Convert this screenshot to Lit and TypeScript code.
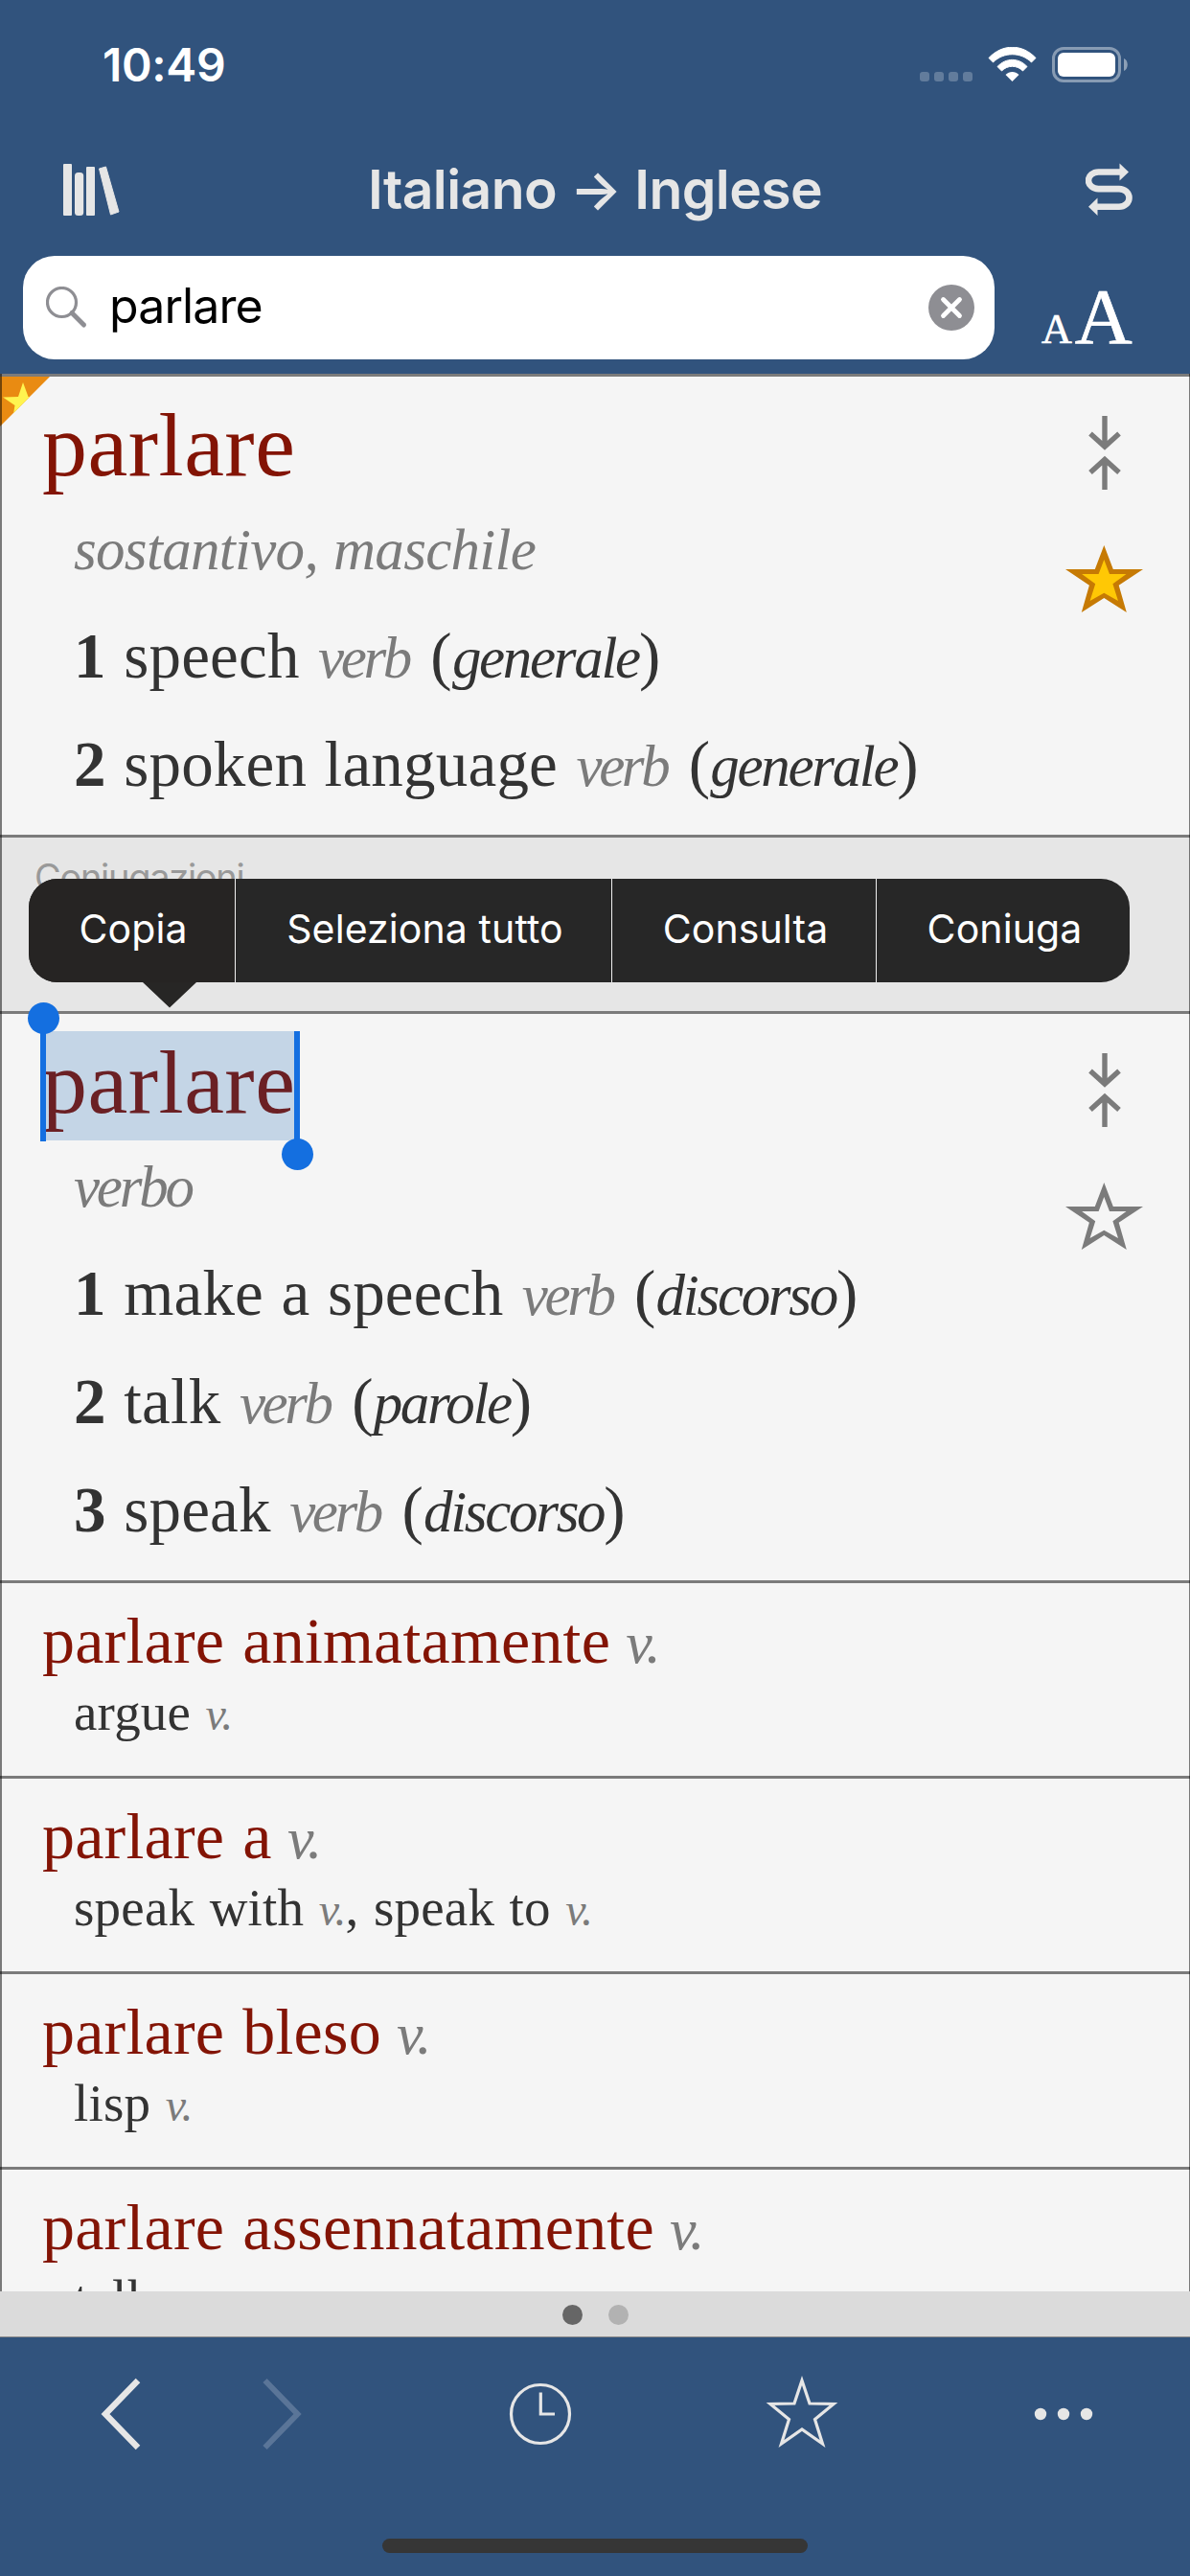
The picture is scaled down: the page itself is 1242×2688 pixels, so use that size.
import { LitElement, html, css, svg, nothing } from 'lit';
import { customElement, property } from 'lit/decorators.js';

const STAR = '40.3,0 49.8,25 81,25 55.7,41.7 63.8,70 40.3,55 16.8,70 24.9,41.7 0,25 30.8,25';
const STAR_INNER = '40.3,15 46,30 63.5,30 49.4,40.3 55,58 40.3,49.7 25.6,58 31.2,40.3 17.1,30 34.6,30';

const SENSES_NOUN = [
  { text: 'speech', note: 'generale' },
  { text: 'spoken language', note: 'generale' },
];

const SENSES_VERB = [
  { text: 'make a speech', note: 'discorso' },
  { text: 'talk', note: 'parole' },
  { text: 'speak', note: 'discorso' },
];

const PHRASES = [
  { title: 'parlare animatamente', words: ['argue'] },
  { title: 'parlare a', words: ['speak with', 'speak to'] },
  { title: 'parlare bleso', words: ['lisp'] },
  { title: 'parlare assennatamente', words: ['talk'] },
];

@customElement('status-bar')
export class StatusBar extends LitElement {
  static styles = css`
    :host {
      display: flex;
      justify-content: space-between;
      align-items: flex-start;
      height: 137px;
      box-sizing: border-box;
      padding: 49px 64px 0 107px;
    }
    .time {
      font: 600 48px/38px Inter, sans-serif;
      letter-spacing: -0.3px;
      color: #fff;
    }
    svg {
      display: block;
    }
  `;

  render() {
    return html`
      <div class="time">10:49</div>
      <svg width="218" height="38" viewBox="0 0 218 38">
        <g fill="#fff" fill-opacity=".24">
          <rect x="0" y="26" width="10" height="10" rx="3"></rect>
          <rect x="15" y="26" width="10" height="10" rx="3"></rect>
          <rect x="30" y="26" width="10" height="10" rx="3"></rect>
          <rect x="45" y="26" width="10" height="10" rx="3"></rect>
        </g>
        <g fill="#fff">
          <path d="M72 11.5 C86 -3.5 107 -3.5 121 11.5 L116.500 16 C105.500 5 87.500 5 76.500 16 Z" stroke="#fff" stroke-width="1" stroke-linejoin="round"></path>
          <path d="M81 20.500 C90 11 103 11 112 20.500 L107.500 25 C101.500 18.700 91.500 18.700 85.500 25 Z" stroke="#fff" stroke-width="1" stroke-linejoin="round"></path>
          <path d="M89.500 29 C93.500 25 99.500 25 103.500 29 L96.500 36 Z"></path>
        </g>
        <rect x="139.500" y="1.500" width="69" height="34" rx="10.500" fill="none" stroke="#fff" stroke-opacity=".42" stroke-width="3"></rect>
        <rect x="144" y="6" width="60" height="25" rx="6" fill="#fff"></rect>
        <path d="M213 12 C218 14 218 23 213 25 Z" fill="#fff" fill-opacity=".45"></path>
      </svg>
    `;
  }
}

@customElement('search-header')
export class SearchHeader extends LitElement {
  static styles = css`
    :host {
      display: block;
    }
    .nav {
      display: flex;
      justify-content: space-between;
      align-items: center;
      height: 122px;
      padding: 0 60px 0 66px;
      box-sizing: border-box;
    }
    .title {
      margin-right: 17px;
      font: 600 57px/122px Inter, sans-serif;
      letter-spacing: -0.6px;
      color: #e6e6e6;
      white-space: nowrap;
    }
    .row {
      display: flex;
      padding: 8px 0 15px 24px;
    }
    .field {
      display: flex;
      align-items: center;
      width: 1014px;
      height: 108px;
      box-sizing: border-box;
      padding: 0 21px 0 24px;
      border-radius: 33px;
      background: #fff;
    }
    .query {
      flex: 1;
      margin-left: 22px;
      padding-bottom: 4px;
      font: 400 50px/60px Inter, sans-serif;
      letter-spacing: -0.9px;
      color: #000;
    }
    .size {
      display: flex;
      align-items: baseline;
      gap: 3px;
      margin-left: 49px;
      padding-top: 17px;
      font-family: 'Liberation Serif', serif;
      line-height: 92px;
      color: #fff;
      -webkit-text-stroke: 0.7px #fff;
    }
    .small {
      font-size: 44px;
    }
    .large {
      font-size: 83px;
    }
    svg {
      display: block;
    }
  `;

  render() {
    return html`
      <div class="nav">
        <svg width="60" height="54" viewBox="0 0 60 54" fill="#e6e6e6">
          <rect x="0" y="0" width="9" height="54" rx="1"></rect>
          <rect x="12" y="9" width="9.200" height="45" rx="3.500"></rect>
          <rect x="24" y="3" width="9" height="51" rx="1"></rect>
          <path d="M37.500 5 L44.500 3 L58 50 L49.500 53 Z" stroke="#e6e6e6" stroke-linejoin="round"></path>
        </svg>
        <div class="title">Italiano → Inglese</div>
        <svg width="49" height="56" viewBox="0 0 49 56">
          <path d="M36 9.500 H13.500 A10.500 8.800 0 0 0 13.500 27.100 H35 A10.500 9.300 0 0 1 35 45.700 H12" fill="none" stroke="#e6e6e6" stroke-width="6.600"></path>
          <path d="M35.500 0.500 L45 9.500 L35.500 18.500 Z M12.500 36.500 L3 45.700 L12.500 55 Z" fill="#e6e6e6"></path>
        </svg>
      </div>
      <div class="row">
        <div class="field">
          <svg width="44" height="44" viewBox="0 0 44 44" fill="none" stroke="#8e8e93">
            <circle cx="16.500" cy="16.500" r="15" stroke-width="3.200"></circle>
            <path d="M27 27.500 L39.500 40" stroke-width="5" stroke-linecap="round"></path>
          </svg>
          <div class="query">parlare</div>
          <svg width="48" height="48" viewBox="0 0 48 48">
            <circle cx="24" cy="24" r="24" fill="#8e8e93"></circle>
            <path d="M15.500 15.500 L32.500 32.500 M32.500 15.500 L15.500 32.500" stroke="#fff" stroke-width="4.800" stroke-linecap="round"></path>
          </svg>
        </div>
        <div class="size"><span class="small">A</span><span class="large">A</span></div>
      </div>
    `;
  }
}

@customElement('dict-entry')
export class DictEntry extends LitElement {
  @property() word = '';
  @property() kind = '';
  @property({ type: Array }) senses: { text: string; note: string }[] = [];
  @property({ type: Boolean }) starred = false;
  @property({ type: Boolean }) selected = false;

  static styles = css`
    :host {
      display: flex;
      justify-content: space-between;
      position: relative;
      box-sizing: border-box;
      padding: 20px 48px 17px 44px;
      font-family: 'Liberation Serif', serif;
      color: #333;
      background: #f5f5f5;
    }
    .word {
      position: relative;
      width: max-content;
      font-size: 94px;
      line-height: 102px;
      letter-spacing: 0.5px;
      color: #831405;
    }
    .word span {
      position: relative;
    }
    .selected {
      color: #6b2024;
    }
    .range {
      position: absolute;
      left: -2px;
      right: -5px;
      top: -2px;
      height: 114px;
      box-sizing: border-box;
      background: #c4d5e6;
    }
    .handle {
      position: absolute;
      top: -2px;
      width: 6px;
      height: 115px;
      background: #146fe0;
    }
    .handle::before {
      content: '';
      position: absolute;
      left: -13px;
      width: 33px;
      height: 33px;
      border-radius: 50%;
      background: #146fe0;
    }
    .from {
      left: -2px;
    }
    .from::before {
      top: -30px;
    }
    .to {
      right: -5px;
    }
    .to::before {
      bottom: -30px;
    }
    .line {
      padding-left: 33px;
      font-size: 67px;
      line-height: 113px;
      letter-spacing: 0.2px;
      word-spacing: 1.5px;
      white-space: nowrap;
    }
    .kind,
    .verb,
    .note {
      font-size: 61px;
      font-style: italic;
      line-height: 1;
    }
    .kind {
      letter-spacing: -0.7px;
      color: #7b7b7b;
    }
    .kind.short {
      letter-spacing: -3.2px;
    }
    .verb {
      margin: 0 4px 0 1px;
      letter-spacing: -3.4px;
      color: #7b7b7b;
    }
    .note {
      letter-spacing: -2.3px;
    }
    .tools {
      display: flex;
      flex-direction: column;
      align-items: center;
      gap: 58px;
      padding-top: 21px;
    }
    .corner {
      position: absolute;
      left: 0;
      top: 0;
    }
    svg {
      display: block;
    }
  `;

  render() {
    return html`
      ${this.starred
        ? html`<svg class="corner" width="52" height="52" viewBox="0 0 52 52">
            <clipPath id="fold"><path d="M0 0 H52 L0 52 Z"></path></clipPath>
            <g clip-path="url(#fold)">
              <rect width="52" height="52" fill="#e98b12"></rect>
              <path d="M24 6 L29.500 21 L45 21 L33 30 L37 44 L24 36 L13 45 L15.500 30 L3 21.500 L19 21 Z" fill="#fff44f"></path>
            </g>
          </svg>`
        : nothing}
      <div>
        <div class="word ${this.selected ? 'selected' : ''}">
          ${this.selected ? html`<div class="range"></div>` : nothing}
          <span>${this.word}</span>
          ${this.selected ? html`<div class="handle from"></div><div class="handle to"></div>` : nothing}
        </div>
        <div class="line"><span class="kind ${this.kind.length < 8 ? 'short' : ''}">${this.kind}</span></div>
        ${this.senses.map(
          (s, i) => html`<div class="line"><b>${i + 1}</b> ${s.text} <span class="verb">verb</span> (<span class="note">${s.note}</span>)</div>`
        )}
      </div>
      <div class="tools">
        <svg width="36" height="77" viewBox="0 0 36 77" fill="none" stroke="#7b7b7b" stroke-width="5.400">
          <path d="M18 0 V32 M3 18.500 L18 32 L33 18.500"></path>
          <path d="M18 77 V45.500 M3 59 L18 45.500 L33 59"></path>
        </svg>
        <svg width="82" height="71" viewBox="0 0 82 71">
          ${this.starred
            ? svg`<polygon points=${STAR} fill="#c67a04"></polygon><polygon points=${STAR_INNER} fill="#ffc805"></polygon>`
            : svg`<polygon points=${STAR} fill="#7b7b7b"></polygon><polygon points=${STAR_INNER} fill="#f5f5f5"></polygon>`}
        </svg>
      </div>
    `;
  }
}

@customElement('phrase-entry')
export class PhraseEntry extends LitElement {
  @property() phrase = '';
  @property({ type: Array }) words: string[] = [];

  static styles = css`
    :host {
      display: block;
      box-sizing: border-box;
      height: 201px;
      padding: 20px 44px 31px 44px;
      font-family: 'Liberation Serif', serif;
      background: #f5f5f5;
      white-space: nowrap;
    }
    .phrase {
      font-size: 68px;
      line-height: 80px;
      letter-spacing: 0.2px;
      word-spacing: 2px;
      color: #831405;
    }
    .words {
      padding-left: 33px;
      font-size: 55px;
      line-height: 70px;
      letter-spacing: 0.2px;
      word-spacing: 1.5px;
      color: #333;
    }
    i {
      color: #7b7b7b;
      line-height: 1;
    }
    .phrase i {
      margin-left: -3px;
      font-size: 62px;
      letter-spacing: -2px;
    }
    .words i {
      font-size: 48px;
      letter-spacing: -1px;
    }
  `;

  render() {
    return html`
      <div class="phrase">${this.phrase} <i>v.</i></div>
      <div class="words">${this.words.map((w, i) => html`${i ? ', ' : ''}${w} <i>v.</i>`)}</div>
    `;
  }
}

@customElement('edit-menu')
export class EditMenu extends LitElement {
  static styles = css`
    :host {
      display: block;
    }
    .bar {
      display: grid;
      grid-template-columns: 216px 393px 276px 264px;
      width: 1149px;
      height: 108px;
      border-radius: 30px;
      background: #272727;
      overflow: hidden;
    }
    .item {
      box-sizing: border-box;
      border-right: 1px solid #f0f0f0;
      padding-left: 3px;
      font: 400 41px/105px Inter, sans-serif;
      letter-spacing: 0.1px;
      text-align: center;
      color: #fff;
    }
    .item:first-child {
      background: #262423;
    }
    .item:last-child {
      border-right: 0;
    }
    .tip {
      display: block;
      margin-left: 119px;
    }
  `;

  render() {
    return html`
      <div class="bar">
        ${['Copia', 'Seleziona tutto', 'Consulta', 'Coniuga'].map((t) => html`<div class="item">${t}</div>`)}
      </div>
      <svg class="tip" width="56" height="27" viewBox="0 0 56 27">
        <path d="M0 0 H56 L28 26.500 Z" fill="#272625"></path>
      </svg>
    `;
  }
}

@customElement('tool-bar')
export class ToolBar extends LitElement {
  static styles = css`
    :host {
      display: block;
      height: 249px;
      background: #31537d;
    }
    .icons {
      display: flex;
      height: 210px;
      padding: 40px 0 0 86px;
      box-sizing: border-box;
    }
    svg {
      display: block;
    }
    .forward {
      margin-left: 89px;
    }
    .history {
      margin-left: 189px;
    }
    .favorites,
    .more {
      margin-left: 193px;
    }
    .home {
      width: 444px;
      height: 15px;
      margin: 0 auto;
      border-radius: 8px;
      background: #363636;
    }
  `;

  render() {
    return html`
      <div class="icons">
        <svg width="80" height="80" viewBox="0 0 80 80" fill="none" stroke="#e6e6e6" stroke-width="6.400">
          <path d="M58 5 L24 40 L58 75"></path>
        </svg>
        <svg class="forward" width="80" height="80" viewBox="0 0 80 80" fill="none" stroke="#5a7598" stroke-width="6">
          <path d="M21.500 5 L55.500 40 L21.500 75"></path>
        </svg>
        <svg class="history" width="80" height="80" viewBox="0 0 80 80" fill="none" stroke="#e6e6e6" stroke-width="3.200">
          <circle cx="40" cy="40" r="30.500"></circle>
          <path d="M40.300 17.500 V40 H55"></path>
        </svg>
        <svg class="favorites" width="80" height="80" viewBox="0 0 80 80" fill="none" stroke="#e6e6e6" stroke-width="3.200" stroke-miterlimit="10">
          <path d="M40 5 L48 29 L73 29.500 L53.500 45.500 L61.500 71 L40 56 L18.500 71 L26.500 45.500 L7 29.500 L32 29 Z"></path>
        </svg>
        <svg class="more" width="80" height="80" viewBox="0 0 80 80" fill="#e6e6e6">
          <circle cx="16" cy="40" r="6.200"></circle>
          <circle cx="40" cy="40" r="6.200"></circle>
          <circle cx="64" cy="40" r="6.200"></circle>
        </svg>
      </div>
      <div class="home"></div>
    `;
  }
}

@customElement('app-root')
export class AppRoot extends LitElement {
  static styles = css`
    :host {
      display: flex;
      flex-direction: column;
      width: 1242px;
      height: 2688px;
      overflow: hidden;
      background: #31537d;
    }
    .top {
      height: 390px;
      flex: none;
    }
    .list {
      position: relative;
      height: 2001px;
      flex: none;
      overflow: hidden;
      background: #f5f5f5;
    }
    .list > dict-entry,
    .list > phrase-entry,
    .conjugations {
      border-top: 3px solid #7b7b7b;
    }
    .list > phrase-entry {
      height: 204px;
    }
    /* page edges, drawn over the rows */
    .list::after {
      content: '';
      position: absolute;
      inset: 0;
      border-left: 2px solid rgba(0, 0, 0, 0.5);
      border-right: 1px solid rgba(0, 0, 0, 0.5);
      pointer-events: none;
    }
    .conjugations {
      height: 181px;
      box-sizing: content-box;
      background: #e6e6e6;
    }
    .label {
      padding: 18px 0 0 36px;
      font: 400 38px/46px Inter, sans-serif;
      letter-spacing: -1.3px;
      color: #999;
    }
    edit-menu {
      position: absolute;
      left: 30px;
      top: 527px;
      z-index: 1;
    }
    .pages {
      display: flex;
      justify-content: center;
      align-items: center;
      gap: 27px;
      flex: none;
      height: 48px;
      box-sizing: border-box;
      border-bottom: 1px solid #8a8a8a;
      padding-top: 2px;
      background: #dbdbdb;
    }
    .dot {
      width: 21px;
      height: 21px;
      border-radius: 50%;
      background: #b2b2b2;
    }
    .current {
      background: #666;
    }
  `;

  render() {
    return html`
      <div class="top">
        <status-bar></status-bar>
        <search-header></search-header>
      </div>
      <div class="list">
        <dict-entry word="parlare" kind="sostantivo, maschile" .senses=${SENSES_NOUN} starred></dict-entry>
        <div class="conjugations"><div class="label">Coniugazioni</div></div>
        <dict-entry word="parlare" kind="verbo" .senses=${SENSES_VERB} selected></dict-entry>
        ${PHRASES.map((p) => html`<phrase-entry .phrase=${p.title} .words=${p.words}></phrase-entry>`)}
        <edit-menu></edit-menu>
      </div>
      <div class="pages">
        <div class="dot current"></div>
        <div class="dot"></div>
      </div>
      <tool-bar></tool-bar>
    `;
  }
}
